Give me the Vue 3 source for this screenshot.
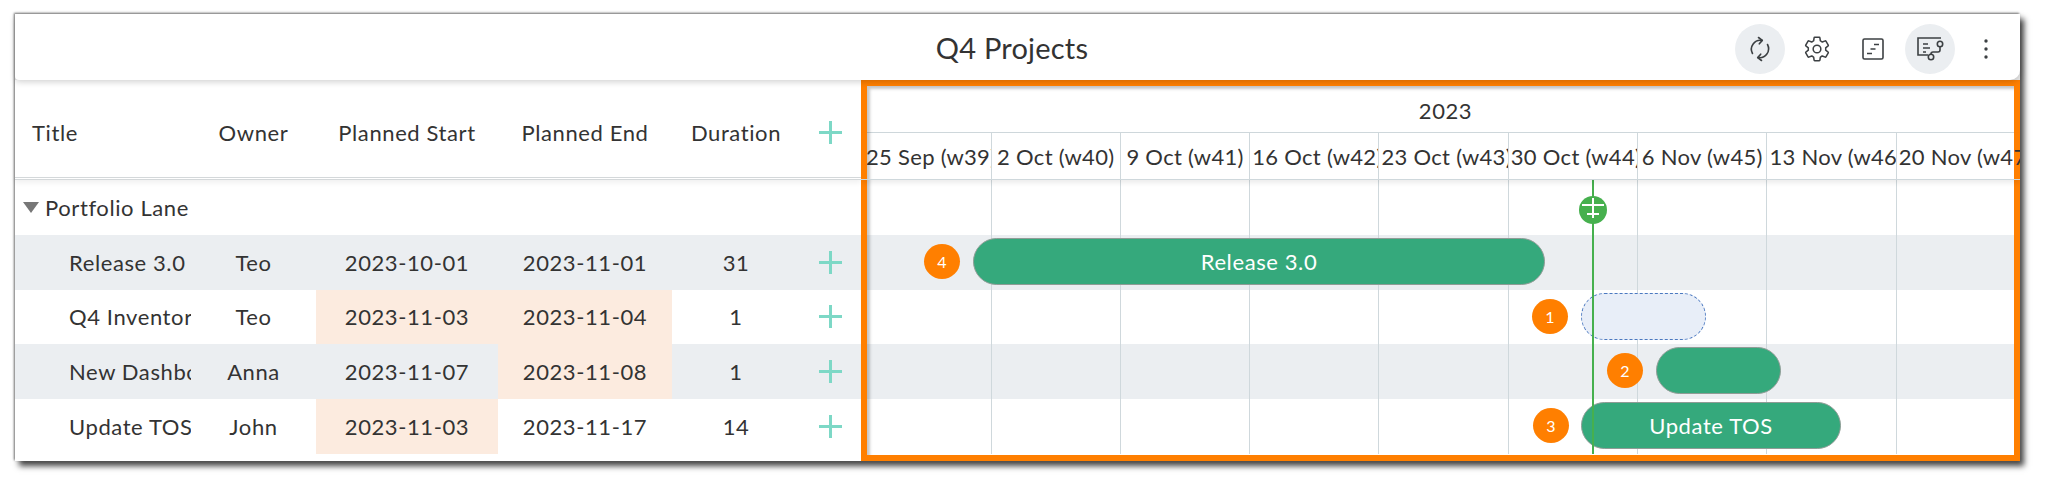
<template>
  <div class="page">
    <div class="card">
      <header class="topbar">
        <h1>Q4 Projects</h1>
        <div class="tools">
          <button class="tool active">
            <svg width="26" height="26" viewBox="0 0 26 26" fill="none" stroke="#3c4043" stroke-width="1.6" stroke-linecap="round" stroke-linejoin="round">
              <path d="M5.5 17.5A9 9 0 0 1 15 4.4" />
              <path d="M11.5 1.5l3.8 2.9-3 3.4" />
              <path d="M20.5 8.5A9 9 0 0 1 11 21.6" />
              <path d="M14.5 24.5l-3.8-2.9 3-3.4" />
            </svg>
          </button>
          <button class="tool">
            <svg width="28" height="28" viewBox="0 0 24 24" fill="none" stroke="#3c4043" stroke-width="1.3" stroke-linejoin="round">
              <circle cx="12" cy="12" r="3.3" />
              <path d="M19.43 12.98c.04-.32.07-.64.07-.98 0-.34-.03-.66-.07-.98l2.11-1.65c.19-.15.24-.42.12-.64l-2-3.46c-.09-.16-.26-.25-.44-.25-.06 0-.12.01-.17.03l-2.49 1c-.52-.4-1.08-.73-1.69-.98l-.38-2.65C14.46 2.18 14.25 2 14 2h-4c-.25 0-.46.18-.49.42l-.38 2.65c-.61.25-1.17.59-1.69.98l-2.49-1c-.06-.02-.12-.03-.18-.03-.17 0-.34.09-.43.25l-2 3.46c-.13.22-.07.49.12.64l2.11 1.65c-.04.32-.07.65-.07.98 0 .33.03.66.07.98l-2.11 1.65c-.19.15-.24.42-.12.64l2 3.46c.09.16.26.25.44.25.06 0 .12-.01.17-.03l2.49-1c.52.4 1.08.73 1.69.98l.38 2.65c.03.24.24.42.49.42h4c.25 0 .46-.18.49-.42l.38-2.65c.61-.25 1.17-.59 1.69-.98l2.49 1c.06.02.12.03.18.03.17 0 .34-.09.43-.25l2-3.46c.12-.22.07-.49-.12-.64l-2.11-1.65z" />
            </svg>
          </button>
          <button class="tool">
            <svg width="24" height="24" viewBox="0 0 24 24" fill="none" stroke="#3c4043" stroke-width="1.6">
              <rect x="2" y="2" width="20" height="20" rx="1.5" />
              <path d="M13 7.5h5M9.5 12h5M6 16.5h5" />
            </svg>
          </button>
          <button class="tool active">
            <svg width="28" height="26" viewBox="0 0 28 26" fill="none" stroke="#3c4043" stroke-width="1.6">
              <path d="M25 2H2v17h10" />
              <path d="M7 8h5M7 12h7M7 16h3" />
              <circle cx="24" cy="8" r="2.7" />
              <circle cx="15" cy="21" r="2.7" />
              <path d="M24 10.7v3.3a2 2 0 0 1-2 2h-5a2 2 0 0 0-2 2v.3" />
            </svg>
          </button>
          <button class="tool">
            <svg width="6" height="22" viewBox="0 0 6 22" fill="#3c4043">
              <circle cx="3" cy="3" r="1.7" />
              <circle cx="3" cy="11" r="1.7" />
              <circle cx="3" cy="19" r="1.7" />
            </svg>
          </button>
        </div>
      </header>

      <div class="body">
        <section class="table">
          <div class="row head">
            <span class="c-title">Title</span>
            <span class="c-owner">Owner</span>
            <span class="c-start">Planned Start</span>
            <span class="c-end">Planned End</span>
            <span class="c-dur">Duration</span>
            <span class="c-add"><i class="plus"></i></span>
          </div>
          <div class="row lane">
            <span class="caret"></span>
            <span>Portfolio Lane</span>
          </div>
          <div v-for="(task, i) in tasks" :key="task.title" class="row" :class="{ shaded: i % 2 === 0 }">
            <span class="c-title task-title"><span>{{ task.title }}</span></span>
            <span class="c-owner">{{ task.owner }}</span>
            <span class="c-start" :class="{ late: task.lateStart }">{{ task.start }}</span>
            <span class="c-end" :class="{ late: task.lateEnd }">{{ task.end }}</span>
            <span class="c-dur">{{ task.duration }}</span>
            <span class="c-add"><i class="plus"></i></span>
          </div>
          <div class="foot"></div>
        </section>

        <section class="timeline">
          <div class="year">2023</div>
          <div class="weeks">
            <div v-for="w in weeks" :key="w" class="week">{{ w }}</div>
          </div>
          <div class="chart">
            <div class="band"></div>
            <div v-for="(task, i) in tasks" :key="task.title" class="band" :class="{ shaded: i % 2 === 0 }"></div>
            <div class="grid">
              <div v-for="w in weeks" :key="w" class="grid-col"></div>
            </div>

            <div
              v-for="bar in bars"
              :key="bar.n"
              class="bar"
              :class="{ planned: bar.planned }"
              :style="{ left: bar.x + 'px', top: bar.y + 'px', width: bar.w + 'px' }"
            >{{ bar.label }}</div>
            <div
              v-for="bar in bars"
              :key="'b' + bar.n"
              class="badge"
              :style="{ left: bar.bx + 'px', top: bar.y + 6 + 'px' }"
            >{{ bar.n }}</div>

            <div class="today"></div>
            <svg class="today-pin" width="28" height="28" viewBox="0 0 28 28">
              <circle cx="14" cy="14" r="14" fill="#46b04e" />
              <path d="M14 2v20M3 9h22M8 18h12" stroke="#fff" stroke-width="2" fill="none" />
            </svg>
          </div>
        </section>
      </div>
    </div>
    <div class="highlight"></div>
  </div>
</template>

<script setup>
const tasks = [
  { title: 'Release 3.0', owner: 'Teo', start: '2023-10-01', end: '2023-11-01', duration: 31 },
  { title: 'Q4 Inventories', owner: 'Teo', start: '2023-11-03', end: '2023-11-04', duration: 1, lateStart: true, lateEnd: true },
  { title: 'New Dashboard', owner: 'Anna', start: '2023-11-07', end: '2023-11-08', duration: 1, lateEnd: true },
  { title: 'Update TOS', owner: 'John', start: '2023-11-03', end: '2023-11-17', duration: 14, lateStart: true }
]

const weeks = [
  '25 Sep (w39)', '2 Oct (w40)', '9 Oct (w41)', '16 Oct (w42)', '23 Oct (w43)',
  '30 Oct (w44)', '6 Nov (w45)', '13 Nov (w46)', '20 Nov (w47)'
]

// x positions are relative to the chart area, which starts at x=861 y=180
const bars = [
  { n: 4, label: 'Release 3.0', x: 112, y: 58, w: 572, bx: 63 },
  { n: 1, label: '', x: 720, y: 113, w: 125, bx: 671, planned: true },
  { n: 2, label: '', x: 795, y: 167, w: 125, bx: 746 },
  { n: 3, label: 'Update TOS', x: 720, y: 222, w: 260, bx: 672 }
]
</script>

<style>
html, body {
  background: #fff;
}
</style>

<style scoped>
.page {
  position: relative;
  width: 2047px;
  height: 488px;
  overflow: hidden;
  background: #fff;
  font-family: Lato, "Open Sans", sans-serif;
  font-size: 22px;
  letter-spacing: 0.6px;
  color: #333;
}
.card {
  position: absolute;
  left: 15px;
  top: 14px;
  width: 2005px;
  height: 447px;
  display: flex;
  flex-direction: column;
  background: #e8e8e8;
  box-shadow: -1px -1px 2px #777, 4px 5px 6px #444;
}
.topbar {
  position: relative;
  z-index: 2;
  flex: 0 0 66px;
  display: flex;
  align-items: center;
  justify-content: center;
  background: #fff;
  border-radius: 0 0 10px 4px;
  box-shadow: 0 2px 6px rgba(0, 0, 0, 0.18);
}
.topbar h1 {
  margin: 0 11px 0 0;
  font-size: 29px;
  font-weight: 400;
  letter-spacing: 0.2px;
  color: #333;
}
.tools {
  position: absolute;
  right: 9px;
  top: 10px;
  display: flex;
  align-items: center;
  gap: 6.5px;
}
.tool {
  width: 50px;
  height: 50px;
  padding: 0;
  border: 0;
  border-radius: 50%;
  background: transparent;
  display: flex;
  align-items: center;
  justify-content: center;
}
.tool.active {
  background: #ebeef1;
}
.body {
  flex: 1;
  display: flex;
  min-height: 0;
}
.table {
  flex: 0 0 846px;
  background: #fff;
  display: flex;
  flex-direction: column;
}
.row {
  flex: 0 0 54.75px;
  display: flex;
  align-items: stretch;
}
.row > span {
  display: flex;
  align-items: center;
  justify-content: center;
  white-space: nowrap;
}
.row.shaded {
  background: #ebeef1;
}
.row.head {
  flex: 0 0 100px;
  box-sizing: border-box;
  padding-top: 7px;
  border-bottom: 3px double #d4d8da;
  box-shadow: 0 3px 5px rgba(0, 0, 0, 0.06);
}
.row.lane {
  align-items: center;
  padding-left: 8px;
  gap: 6px;
}
.row > .caret {
  width: 0;
  height: 0;
  border-left: 8px solid transparent;
  border-right: 8px solid transparent;
  border-top: 11px solid #777;
}
.row > .c-title {
  flex: 0 0 176px;
  justify-content: flex-start;
  padding-left: 17px;
  box-sizing: border-box;
  overflow: hidden;
}
.row > .task-title {
  padding-left: 54px;
}
.task-title span {
  display: block;
  min-width: 0;
  overflow: hidden;
}
.c-owner {
  flex: 0 0 125px;
}
.c-start {
  flex: 0 0 182px;
}
.c-end {
  flex: 0 0 174px;
}
.c-dur {
  flex: 0 0 128px;
}
.c-add {
  flex: 1;
}
.late {
  background: #fcebdf;
}
.plus {
  display: block;
  width: 23px;
  height: 23px;
  background:
    linear-gradient(#7dd8c6, #7dd8c6) center / 100% 3px no-repeat,
    linear-gradient(#7dd8c6, #7dd8c6) center / 3px 100% no-repeat;
}
.foot {
  flex: 0 0 3px;
  background: #fff;
}
.timeline {
  flex: 1;
  min-width: 0;
  background: #fff;
  display: flex;
  flex-direction: column;
  overflow: hidden;
}
.year {
  flex: 0 0 53px;
  display: flex;
  align-items: center;
  justify-content: center;
  padding: 8px 0 0 10px;
  box-sizing: border-box;
  border-bottom: 1px solid #cfd8dc;
}
.weeks {
  flex: 0 0 47px;
  min-height: 0;
  display: flex;
  border-bottom: 1px solid #cfd8dc;
  box-shadow: 0 3px 5px rgba(0, 0, 0, 0.08);
  position: relative;
  z-index: 1;
  box-sizing: border-box;
}
.week {
  flex: 0 0 129.3px;
  box-sizing: border-box;
  padding: 0 2px;
  border-right: 1px solid #cfd8dc;
  overflow: hidden;
  white-space: nowrap;
  text-align: center;
  line-height: 48px;
  letter-spacing: 0.3px;
}
.week:first-child {
  padding-left: 5px;
}
.week:first-child,
.grid-col:first-child {
  flex-basis: 130.6px;
}
.chart {
  position: relative;
  flex: 1;
  min-height: 0;
}
.grid {
  position: absolute;
  left: 0;
  top: 0;
  bottom: 7px;
  display: flex;
}
.grid-col {
  flex: 0 0 129.3px;
  box-sizing: border-box;
  border-right: 1px solid #cfd8dc;
}
.band {
  height: 54.75px;
}
.band.shaded {
  background: #ebeef1;
}
.bar {
  position: absolute;
  height: 47px;
  box-sizing: border-box;
  border: 1px solid #8f9c96;
  border-radius: 24px;
  background: #35a97c;
  color: #fff;
  display: flex;
  align-items: center;
  justify-content: center;
}
.bar.planned {
  background: #e8eef8;
  border: 1px dashed #4a78c0;
}
.badge {
  position: absolute;
  width: 36px;
  height: 35px;
  border-radius: 50%;
  background: #ff7f00;
  color: #fff;
  font-size: 16px;
  letter-spacing: 0;
  display: flex;
  align-items: center;
  justify-content: center;
}
.today {
  position: absolute;
  left: 731px;
  top: 0;
  bottom: 7px;
  width: 2px;
  background: #46b04e;
}
.today-pin {
  position: absolute;
  left: 718px;
  top: 16px;
}
.highlight {
  position: absolute;
  left: 861px;
  top: 80px;
  width: 1159px;
  height: 381px;
  box-sizing: border-box;
  border: 6px solid #ff7f00;
  box-shadow: inset 3px 3px 3px rgba(0, 0, 0, 0.22);
  pointer-events: none;
}
</style>
